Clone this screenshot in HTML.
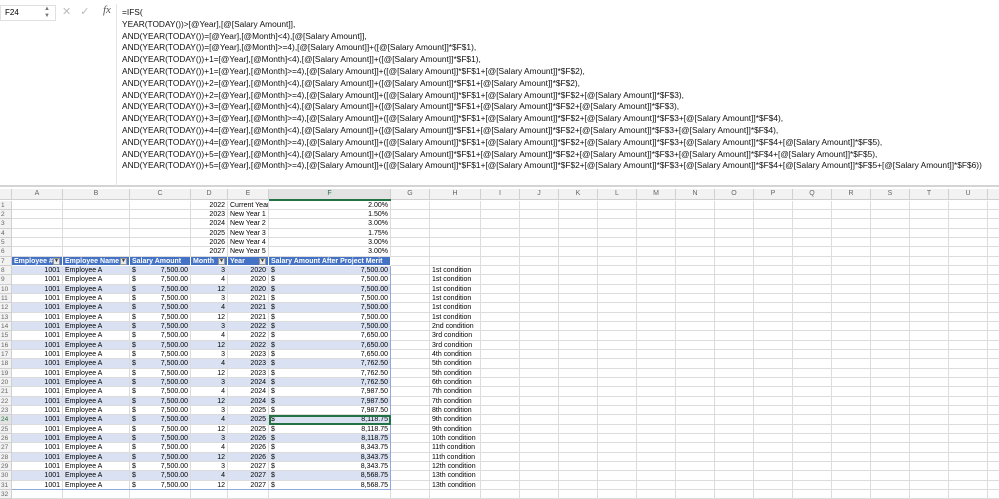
<!DOCTYPE html>
<html><head><meta charset="utf-8"><style>
*{margin:0;padding:0;box-sizing:border-box}
body{width:999px;height:496px;overflow:hidden;background:#fff;font-family:"Liberation Sans",Arial,sans-serif;position:relative}
#top{position:absolute;left:0;top:0;width:999px;height:187px;background:#fff;border-bottom:2px solid #d4d4d4}
#nb{position:absolute;left:0;top:5px;width:56px;height:16px;border:1px solid #e0e0e0;font-size:8px;line-height:14px;padding-left:4px}
#nb span{position:absolute;right:5px;top:0;font-size:6px;color:#777;line-height:7px}
#icons{position:absolute;left:62px;top:5px;font-size:11px;color:#bbb;letter-spacing:9px}
#fx{position:absolute;left:103px;top:4px;font-family:"Liberation Serif",serif;font-style:italic;font-size:11px;color:#555}
#fsep{position:absolute;left:116px;top:4px;width:1px;height:182px;background:#e4e4e4}
#f{position:absolute;left:122px;top:7px;font-size:8.35px;line-height:11.8px;white-space:pre;color:#111}
.r{position:absolute;left:0;height:9.33px;display:flex;font-size:7px;line-height:9px;white-space:nowrap}
.r>span{flex:none;border-right:1px solid #dcdcdc;border-bottom:1px solid #dcdcdc;overflow:hidden;padding:0 2px}
.h>span{background:#f2f2f2;color:#666;text-align:center;border-color:#d0d0d0}
.c0{width:12px;background:#f2f2f2;color:#666;text-align:left;padding:0 1px!important;border-color:#d0d0d0!important;font-size:6.5px}
.cA{width:51px;text-align:right}.cB{width:67px}.cC{width:61px}.cD{width:37px;text-align:right}.cE{width:41px}.cF{width:122px}.cG{width:39px}.cH{width:51px}.cI{width:39px}
.rt{text-align:right}
.th>span:not(.c0):not(.x){background:#4472c4;color:#fff;font-weight:bold;border-color:#fff}
.b>span.t{background:#d9e1f2}
.dd{display:inline-block;width:7px;height:7px;background:#e8e8e8;border:1px solid #999;vertical-align:middle;float:right;margin-top:1px;font-size:5px;line-height:5px;color:#333;text-align:center}
.money{display:flex;justify-content:space-between}
i{font-style:normal}
#sel{position:absolute;left:269px;top:414.8px;width:122px;height:9.8px;border:2px solid #217346}
#selF{position:absolute;left:269px;top:199px;width:122px;height:2px;background:#217346}
</style></head><body>
<div id="top">
<div id="nb">F24<span>▲<br>▼</span></div>
<div id="icons">✕✓</div>
<div id="fx">fx</div>
<div id="fsep"></div>
<div id="f">=IFS(
YEAR(TODAY())&gt;[@Year],[@[Salary Amount]],
AND(YEAR(TODAY())=[@Year],[@Month]&lt;4),[@[Salary Amount]],
AND(YEAR(TODAY())=[@Year],[@Month]&gt;=4),[@[Salary Amount]]+([@[Salary Amount]]*$F$1),
AND(YEAR(TODAY())+1=[@Year],[@Month]&lt;4),[@[Salary Amount]]+([@[Salary Amount]]*$F$1),
AND(YEAR(TODAY())+1=[@Year],[@Month]&gt;=4),[@[Salary Amount]]+([@[Salary Amount]]*$F$1+[@[Salary Amount]]*$F$2),
AND(YEAR(TODAY())+2=[@Year],[@Month]&lt;4),[@[Salary Amount]]+([@[Salary Amount]]*$F$1+[@[Salary Amount]]*$F$2),
AND(YEAR(TODAY())+2=[@Year],[@Month]&gt;=4),[@[Salary Amount]]+([@[Salary Amount]]*$F$1+[@[Salary Amount]]*$F$2+[@[Salary Amount]]*$F$3),
AND(YEAR(TODAY())+3=[@Year],[@Month]&lt;4),[@[Salary Amount]]+([@[Salary Amount]]*$F$1+[@[Salary Amount]]*$F$2+[@[Salary Amount]]*$F$3),
AND(YEAR(TODAY())+3=[@Year],[@Month]&gt;=4),[@[Salary Amount]]+([@[Salary Amount]]*$F$1+[@[Salary Amount]]*$F$2+[@[Salary Amount]]*$F$3+[@[Salary Amount]]*$F$4),
AND(YEAR(TODAY())+4=[@Year],[@Month]&lt;4),[@[Salary Amount]]+([@[Salary Amount]]*$F$1+[@[Salary Amount]]*$F$2+[@[Salary Amount]]*$F$3+[@[Salary Amount]]*$F$4),
AND(YEAR(TODAY())+4=[@Year],[@Month]&gt;=4),[@[Salary Amount]]+([@[Salary Amount]]*$F$1+[@[Salary Amount]]*$F$2+[@[Salary Amount]]*$F$3+[@[Salary Amount]]*$F$4+[@[Salary Amount]]*$F$5),
AND(YEAR(TODAY())+5=[@Year],[@Month]&lt;4),[@[Salary Amount]]+([@[Salary Amount]]*$F$1+[@[Salary Amount]]*$F$2+[@[Salary Amount]]*$F$3+[@[Salary Amount]]*$F$4+[@[Salary Amount]]*$F$5),
AND(YEAR(TODAY())+5=[@Year],[@Month]&gt;=4),[@[Salary Amount]]+([@[Salary Amount]]*$F$1+[@[Salary Amount]]*$F$2+[@[Salary Amount]]*$F$3+[@[Salary Amount]]*$F$4+[@[Salary Amount]]*$F$5+[@[Salary Amount]]*$F$6))</div>
</div>

<div class="r h" style="top:189px;height:11px;line-height:10px"><span class="c0"></span><span class="cA">A</span><span class="cB">B</span><span class="cC">C</span><span class="cD" style="text-align:center">D</span><span class="cE">E</span><span class="cF" style="background:#e2e2e2;color:#217346">F</span><span class="cG">G</span><span class="cH">H</span><span class="cI">I</span><span class="cI">J</span><span class="cI">K</span><span class="cI">L</span><span class="cI">M</span><span class="cI">N</span><span class="cI">O</span><span class="cI">P</span><span class="cI">Q</span><span class="cI">R</span><span class="cI">S</span><span class="cI">T</span><span class="cI">U</span><span class="cI"></span></div>

<div class="r" style="top:200.5px"><span class="c0">1</span><span class="cA"></span><span class="cB"></span><span class="cC"></span><span class="cD">2022</span><span class="cE">Current Year</span><span class="cF rt">2.00%</span><span class="cG"></span><span class="cH"></span><span class="cI"></span><span class="cI"></span><span class="cI"></span><span class="cI"></span><span class="cI"></span><span class="cI"></span><span class="cI"></span><span class="cI"></span><span class="cI"></span><span class="cI"></span><span class="cI"></span><span class="cI"></span><span class="cI"></span><span class="cI"></span></div>
<div class="r" style="top:209.8px"><span class="c0">2</span><span class="cA"></span><span class="cB"></span><span class="cC"></span><span class="cD">2023</span><span class="cE">New Year 1</span><span class="cF rt">1.50%</span><span class="cG"></span><span class="cH"></span><span class="cI"></span><span class="cI"></span><span class="cI"></span><span class="cI"></span><span class="cI"></span><span class="cI"></span><span class="cI"></span><span class="cI"></span><span class="cI"></span><span class="cI"></span><span class="cI"></span><span class="cI"></span><span class="cI"></span><span class="cI"></span></div>
<div class="r" style="top:219.2px"><span class="c0">3</span><span class="cA"></span><span class="cB"></span><span class="cC"></span><span class="cD">2024</span><span class="cE">New Year 2</span><span class="cF rt">3.00%</span><span class="cG"></span><span class="cH"></span><span class="cI"></span><span class="cI"></span><span class="cI"></span><span class="cI"></span><span class="cI"></span><span class="cI"></span><span class="cI"></span><span class="cI"></span><span class="cI"></span><span class="cI"></span><span class="cI"></span><span class="cI"></span><span class="cI"></span><span class="cI"></span></div>
<div class="r" style="top:228.5px"><span class="c0">4</span><span class="cA"></span><span class="cB"></span><span class="cC"></span><span class="cD">2025</span><span class="cE">New Year 3</span><span class="cF rt">1.75%</span><span class="cG"></span><span class="cH"></span><span class="cI"></span><span class="cI"></span><span class="cI"></span><span class="cI"></span><span class="cI"></span><span class="cI"></span><span class="cI"></span><span class="cI"></span><span class="cI"></span><span class="cI"></span><span class="cI"></span><span class="cI"></span><span class="cI"></span><span class="cI"></span></div>
<div class="r" style="top:237.8px"><span class="c0">5</span><span class="cA"></span><span class="cB"></span><span class="cC"></span><span class="cD">2026</span><span class="cE">New Year 4</span><span class="cF rt">3.00%</span><span class="cG"></span><span class="cH"></span><span class="cI"></span><span class="cI"></span><span class="cI"></span><span class="cI"></span><span class="cI"></span><span class="cI"></span><span class="cI"></span><span class="cI"></span><span class="cI"></span><span class="cI"></span><span class="cI"></span><span class="cI"></span><span class="cI"></span><span class="cI"></span></div>
<div class="r" style="top:247.2px"><span class="c0">6</span><span class="cA"></span><span class="cB"></span><span class="cC"></span><span class="cD">2027</span><span class="cE">New Year 5</span><span class="cF rt">3.00%</span><span class="cG"></span><span class="cH"></span><span class="cI"></span><span class="cI"></span><span class="cI"></span><span class="cI"></span><span class="cI"></span><span class="cI"></span><span class="cI"></span><span class="cI"></span><span class="cI"></span><span class="cI"></span><span class="cI"></span><span class="cI"></span><span class="cI"></span><span class="cI"></span></div>
<div class="r th" style="top:256.5px"><span class="c0">7</span><span class="cA" style="text-align:left">Employee #<i class="dd">▼</i></span><span class="cB">Employee Name<i class="dd">▼</i></span><span class="cC">Salary Amount<i class="dd">▼</i></span><span class="cD" style="text-align:left">Month<i class="dd">▼</i></span><span class="cE">Year<i class="dd">▼</i></span><span class="cF">Salary Amount After Project Merit<i class="dd">▼</i></span><span class="cG x"></span><span class="cH x"></span><span class="cI x"></span><span class="cI x"></span><span class="cI x"></span><span class="cI x"></span><span class="cI x"></span><span class="cI x"></span><span class="cI x"></span><span class="cI x"></span><span class="cI x"></span><span class="cI x"></span><span class="cI x"></span><span class="cI x"></span><span class="cI x"></span><span class="cI x"></span></div>

<div class="r b" style="top:265.8px"><span class="c0">8</span><span class="cA t">1001</span><span class="cB t">Employee A</span><span class="cC t money"><i>$</i>7,500.00</span><span class="cD t">3</span><span class="cE t rt">2020</span><span class="cF t money"><i>$</i>7,500.00</span><span class="cG"></span><span class="cH">1st condition</span><span class="cI"></span><span class="cI"></span><span class="cI"></span><span class="cI"></span><span class="cI"></span><span class="cI"></span><span class="cI"></span><span class="cI"></span><span class="cI"></span><span class="cI"></span><span class="cI"></span><span class="cI"></span><span class="cI"></span><span class="cI"></span></div>
<div class="r" style="top:275.2px"><span class="c0">9</span><span class="cA t">1001</span><span class="cB t">Employee A</span><span class="cC t money"><i>$</i>7,500.00</span><span class="cD t">4</span><span class="cE t rt">2020</span><span class="cF t money"><i>$</i>7,500.00</span><span class="cG"></span><span class="cH">1st condition</span><span class="cI"></span><span class="cI"></span><span class="cI"></span><span class="cI"></span><span class="cI"></span><span class="cI"></span><span class="cI"></span><span class="cI"></span><span class="cI"></span><span class="cI"></span><span class="cI"></span><span class="cI"></span><span class="cI"></span><span class="cI"></span></div>
<div class="r b" style="top:284.5px"><span class="c0">10</span><span class="cA t">1001</span><span class="cB t">Employee A</span><span class="cC t money"><i>$</i>7,500.00</span><span class="cD t">12</span><span class="cE t rt">2020</span><span class="cF t money"><i>$</i>7,500.00</span><span class="cG"></span><span class="cH">1st condition</span><span class="cI"></span><span class="cI"></span><span class="cI"></span><span class="cI"></span><span class="cI"></span><span class="cI"></span><span class="cI"></span><span class="cI"></span><span class="cI"></span><span class="cI"></span><span class="cI"></span><span class="cI"></span><span class="cI"></span><span class="cI"></span></div>
<div class="r" style="top:293.8px"><span class="c0">11</span><span class="cA t">1001</span><span class="cB t">Employee A</span><span class="cC t money"><i>$</i>7,500.00</span><span class="cD t">3</span><span class="cE t rt">2021</span><span class="cF t money"><i>$</i>7,500.00</span><span class="cG"></span><span class="cH">1st condition</span><span class="cI"></span><span class="cI"></span><span class="cI"></span><span class="cI"></span><span class="cI"></span><span class="cI"></span><span class="cI"></span><span class="cI"></span><span class="cI"></span><span class="cI"></span><span class="cI"></span><span class="cI"></span><span class="cI"></span><span class="cI"></span></div>
<div class="r b" style="top:303.2px"><span class="c0">12</span><span class="cA t">1001</span><span class="cB t">Employee A</span><span class="cC t money"><i>$</i>7,500.00</span><span class="cD t">4</span><span class="cE t rt">2021</span><span class="cF t money"><i>$</i>7,500.00</span><span class="cG"></span><span class="cH">1st condition</span><span class="cI"></span><span class="cI"></span><span class="cI"></span><span class="cI"></span><span class="cI"></span><span class="cI"></span><span class="cI"></span><span class="cI"></span><span class="cI"></span><span class="cI"></span><span class="cI"></span><span class="cI"></span><span class="cI"></span><span class="cI"></span></div>
<div class="r" style="top:312.5px"><span class="c0">13</span><span class="cA t">1001</span><span class="cB t">Employee A</span><span class="cC t money"><i>$</i>7,500.00</span><span class="cD t">12</span><span class="cE t rt">2021</span><span class="cF t money"><i>$</i>7,500.00</span><span class="cG"></span><span class="cH">1st condition</span><span class="cI"></span><span class="cI"></span><span class="cI"></span><span class="cI"></span><span class="cI"></span><span class="cI"></span><span class="cI"></span><span class="cI"></span><span class="cI"></span><span class="cI"></span><span class="cI"></span><span class="cI"></span><span class="cI"></span><span class="cI"></span></div>
<div class="r b" style="top:321.8px"><span class="c0">14</span><span class="cA t">1001</span><span class="cB t">Employee A</span><span class="cC t money"><i>$</i>7,500.00</span><span class="cD t">3</span><span class="cE t rt">2022</span><span class="cF t money"><i>$</i>7,500.00</span><span class="cG"></span><span class="cH">2nd condition</span><span class="cI"></span><span class="cI"></span><span class="cI"></span><span class="cI"></span><span class="cI"></span><span class="cI"></span><span class="cI"></span><span class="cI"></span><span class="cI"></span><span class="cI"></span><span class="cI"></span><span class="cI"></span><span class="cI"></span><span class="cI"></span></div>
<div class="r" style="top:331.2px"><span class="c0">15</span><span class="cA t">1001</span><span class="cB t">Employee A</span><span class="cC t money"><i>$</i>7,500.00</span><span class="cD t">4</span><span class="cE t rt">2022</span><span class="cF t money"><i>$</i>7,650.00</span><span class="cG"></span><span class="cH">3rd condition</span><span class="cI"></span><span class="cI"></span><span class="cI"></span><span class="cI"></span><span class="cI"></span><span class="cI"></span><span class="cI"></span><span class="cI"></span><span class="cI"></span><span class="cI"></span><span class="cI"></span><span class="cI"></span><span class="cI"></span><span class="cI"></span></div>
<div class="r b" style="top:340.5px"><span class="c0">16</span><span class="cA t">1001</span><span class="cB t">Employee A</span><span class="cC t money"><i>$</i>7,500.00</span><span class="cD t">12</span><span class="cE t rt">2022</span><span class="cF t money"><i>$</i>7,650.00</span><span class="cG"></span><span class="cH">3rd condition</span><span class="cI"></span><span class="cI"></span><span class="cI"></span><span class="cI"></span><span class="cI"></span><span class="cI"></span><span class="cI"></span><span class="cI"></span><span class="cI"></span><span class="cI"></span><span class="cI"></span><span class="cI"></span><span class="cI"></span><span class="cI"></span></div>
<div class="r" style="top:349.8px"><span class="c0">17</span><span class="cA t">1001</span><span class="cB t">Employee A</span><span class="cC t money"><i>$</i>7,500.00</span><span class="cD t">3</span><span class="cE t rt">2023</span><span class="cF t money"><i>$</i>7,650.00</span><span class="cG"></span><span class="cH">4th condition</span><span class="cI"></span><span class="cI"></span><span class="cI"></span><span class="cI"></span><span class="cI"></span><span class="cI"></span><span class="cI"></span><span class="cI"></span><span class="cI"></span><span class="cI"></span><span class="cI"></span><span class="cI"></span><span class="cI"></span><span class="cI"></span></div>
<div class="r b" style="top:359.2px"><span class="c0">18</span><span class="cA t">1001</span><span class="cB t">Employee A</span><span class="cC t money"><i>$</i>7,500.00</span><span class="cD t">4</span><span class="cE t rt">2023</span><span class="cF t money"><i>$</i>7,762.50</span><span class="cG"></span><span class="cH">5th condition</span><span class="cI"></span><span class="cI"></span><span class="cI"></span><span class="cI"></span><span class="cI"></span><span class="cI"></span><span class="cI"></span><span class="cI"></span><span class="cI"></span><span class="cI"></span><span class="cI"></span><span class="cI"></span><span class="cI"></span><span class="cI"></span></div>
<div class="r" style="top:368.5px"><span class="c0">19</span><span class="cA t">1001</span><span class="cB t">Employee A</span><span class="cC t money"><i>$</i>7,500.00</span><span class="cD t">12</span><span class="cE t rt">2023</span><span class="cF t money"><i>$</i>7,762.50</span><span class="cG"></span><span class="cH">5th condition</span><span class="cI"></span><span class="cI"></span><span class="cI"></span><span class="cI"></span><span class="cI"></span><span class="cI"></span><span class="cI"></span><span class="cI"></span><span class="cI"></span><span class="cI"></span><span class="cI"></span><span class="cI"></span><span class="cI"></span><span class="cI"></span></div>
<div class="r b" style="top:377.8px"><span class="c0">20</span><span class="cA t">1001</span><span class="cB t">Employee A</span><span class="cC t money"><i>$</i>7,500.00</span><span class="cD t">3</span><span class="cE t rt">2024</span><span class="cF t money"><i>$</i>7,762.50</span><span class="cG"></span><span class="cH">6th condition</span><span class="cI"></span><span class="cI"></span><span class="cI"></span><span class="cI"></span><span class="cI"></span><span class="cI"></span><span class="cI"></span><span class="cI"></span><span class="cI"></span><span class="cI"></span><span class="cI"></span><span class="cI"></span><span class="cI"></span><span class="cI"></span></div>
<div class="r" style="top:387.2px"><span class="c0">21</span><span class="cA t">1001</span><span class="cB t">Employee A</span><span class="cC t money"><i>$</i>7,500.00</span><span class="cD t">4</span><span class="cE t rt">2024</span><span class="cF t money"><i>$</i>7,987.50</span><span class="cG"></span><span class="cH">7th condition</span><span class="cI"></span><span class="cI"></span><span class="cI"></span><span class="cI"></span><span class="cI"></span><span class="cI"></span><span class="cI"></span><span class="cI"></span><span class="cI"></span><span class="cI"></span><span class="cI"></span><span class="cI"></span><span class="cI"></span><span class="cI"></span></div>
<div class="r b" style="top:396.5px"><span class="c0">22</span><span class="cA t">1001</span><span class="cB t">Employee A</span><span class="cC t money"><i>$</i>7,500.00</span><span class="cD t">12</span><span class="cE t rt">2024</span><span class="cF t money"><i>$</i>7,987.50</span><span class="cG"></span><span class="cH">7th condition</span><span class="cI"></span><span class="cI"></span><span class="cI"></span><span class="cI"></span><span class="cI"></span><span class="cI"></span><span class="cI"></span><span class="cI"></span><span class="cI"></span><span class="cI"></span><span class="cI"></span><span class="cI"></span><span class="cI"></span><span class="cI"></span></div>
<div class="r" style="top:405.8px"><span class="c0">23</span><span class="cA t">1001</span><span class="cB t">Employee A</span><span class="cC t money"><i>$</i>7,500.00</span><span class="cD t">3</span><span class="cE t rt">2025</span><span class="cF t money"><i>$</i>7,987.50</span><span class="cG"></span><span class="cH">8th condition</span><span class="cI"></span><span class="cI"></span><span class="cI"></span><span class="cI"></span><span class="cI"></span><span class="cI"></span><span class="cI"></span><span class="cI"></span><span class="cI"></span><span class="cI"></span><span class="cI"></span><span class="cI"></span><span class="cI"></span><span class="cI"></span></div>
<div class="r b" style="top:415.2px"><span class="c0" style="color:#217346;background:#e2e2e2">24</span><span class="cA t">1001</span><span class="cB t">Employee A</span><span class="cC t money"><i>$</i>7,500.00</span><span class="cD t">4</span><span class="cE t rt">2025</span><span class="cF t money"><i>$</i>8,118.75</span><span class="cG"></span><span class="cH">9th condition</span><span class="cI"></span><span class="cI"></span><span class="cI"></span><span class="cI"></span><span class="cI"></span><span class="cI"></span><span class="cI"></span><span class="cI"></span><span class="cI"></span><span class="cI"></span><span class="cI"></span><span class="cI"></span><span class="cI"></span><span class="cI"></span></div>
<div class="r" style="top:424.5px"><span class="c0">25</span><span class="cA t">1001</span><span class="cB t">Employee A</span><span class="cC t money"><i>$</i>7,500.00</span><span class="cD t">12</span><span class="cE t rt">2025</span><span class="cF t money"><i>$</i>8,118.75</span><span class="cG"></span><span class="cH">9th condition</span><span class="cI"></span><span class="cI"></span><span class="cI"></span><span class="cI"></span><span class="cI"></span><span class="cI"></span><span class="cI"></span><span class="cI"></span><span class="cI"></span><span class="cI"></span><span class="cI"></span><span class="cI"></span><span class="cI"></span><span class="cI"></span></div>
<div class="r b" style="top:433.8px"><span class="c0">26</span><span class="cA t">1001</span><span class="cB t">Employee A</span><span class="cC t money"><i>$</i>7,500.00</span><span class="cD t">3</span><span class="cE t rt">2026</span><span class="cF t money"><i>$</i>8,118.75</span><span class="cG"></span><span class="cH">10th condition</span><span class="cI"></span><span class="cI"></span><span class="cI"></span><span class="cI"></span><span class="cI"></span><span class="cI"></span><span class="cI"></span><span class="cI"></span><span class="cI"></span><span class="cI"></span><span class="cI"></span><span class="cI"></span><span class="cI"></span><span class="cI"></span></div>
<div class="r" style="top:443.2px"><span class="c0">27</span><span class="cA t">1001</span><span class="cB t">Employee A</span><span class="cC t money"><i>$</i>7,500.00</span><span class="cD t">4</span><span class="cE t rt">2026</span><span class="cF t money"><i>$</i>8,343.75</span><span class="cG"></span><span class="cH">11th condition</span><span class="cI"></span><span class="cI"></span><span class="cI"></span><span class="cI"></span><span class="cI"></span><span class="cI"></span><span class="cI"></span><span class="cI"></span><span class="cI"></span><span class="cI"></span><span class="cI"></span><span class="cI"></span><span class="cI"></span><span class="cI"></span></div>
<div class="r b" style="top:452.5px"><span class="c0">28</span><span class="cA t">1001</span><span class="cB t">Employee A</span><span class="cC t money"><i>$</i>7,500.00</span><span class="cD t">12</span><span class="cE t rt">2026</span><span class="cF t money"><i>$</i>8,343.75</span><span class="cG"></span><span class="cH">11th condition</span><span class="cI"></span><span class="cI"></span><span class="cI"></span><span class="cI"></span><span class="cI"></span><span class="cI"></span><span class="cI"></span><span class="cI"></span><span class="cI"></span><span class="cI"></span><span class="cI"></span><span class="cI"></span><span class="cI"></span><span class="cI"></span></div>
<div class="r" style="top:461.8px"><span class="c0">29</span><span class="cA t">1001</span><span class="cB t">Employee A</span><span class="cC t money"><i>$</i>7,500.00</span><span class="cD t">3</span><span class="cE t rt">2027</span><span class="cF t money"><i>$</i>8,343.75</span><span class="cG"></span><span class="cH">12th condition</span><span class="cI"></span><span class="cI"></span><span class="cI"></span><span class="cI"></span><span class="cI"></span><span class="cI"></span><span class="cI"></span><span class="cI"></span><span class="cI"></span><span class="cI"></span><span class="cI"></span><span class="cI"></span><span class="cI"></span><span class="cI"></span></div>
<div class="r b" style="top:471.2px"><span class="c0">30</span><span class="cA t">1001</span><span class="cB t">Employee A</span><span class="cC t money"><i>$</i>7,500.00</span><span class="cD t">4</span><span class="cE t rt">2027</span><span class="cF t money"><i>$</i>8,568.75</span><span class="cG"></span><span class="cH">13th condition</span><span class="cI"></span><span class="cI"></span><span class="cI"></span><span class="cI"></span><span class="cI"></span><span class="cI"></span><span class="cI"></span><span class="cI"></span><span class="cI"></span><span class="cI"></span><span class="cI"></span><span class="cI"></span><span class="cI"></span><span class="cI"></span></div>
<div class="r" style="top:480.5px"><span class="c0">31</span><span class="cA t">1001</span><span class="cB t">Employee A</span><span class="cC t money"><i>$</i>7,500.00</span><span class="cD t">12</span><span class="cE t rt">2027</span><span class="cF t money"><i>$</i>8,568.75</span><span class="cG"></span><span class="cH">13th condition</span><span class="cI"></span><span class="cI"></span><span class="cI"></span><span class="cI"></span><span class="cI"></span><span class="cI"></span><span class="cI"></span><span class="cI"></span><span class="cI"></span><span class="cI"></span><span class="cI"></span><span class="cI"></span><span class="cI"></span><span class="cI"></span></div>
<div class="r" style="top:489.8px"><span class="c0">32</span><span class="cA"></span><span class="cB"></span><span class="cC"></span><span class="cD"></span><span class="cE"></span><span class="cF"></span><span class="cG"></span><span class="cH"></span><span class="cI"></span><span class="cI"></span><span class="cI"></span><span class="cI"></span><span class="cI"></span><span class="cI"></span><span class="cI"></span><span class="cI"></span><span class="cI"></span><span class="cI"></span><span class="cI"></span><span class="cI"></span><span class="cI"></span><span class="cI"></span></div>
<div style="position:absolute;left:12px;top:265.8px;width:379px;height:224px;border-bottom:1px solid #8ea9db;border-right:1px solid #8ea9db;pointer-events:none"></div>
<div id="selF"></div>
<div id="sel"></div>
</body></html>
